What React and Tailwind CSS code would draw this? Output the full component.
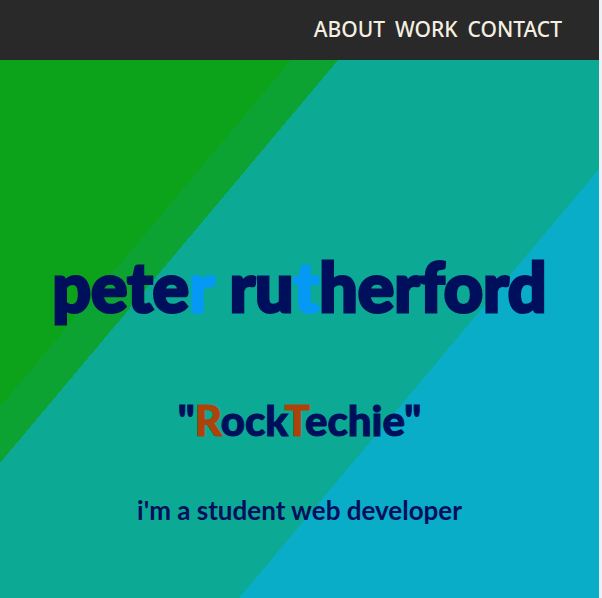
const links = ["About", "Work", "Contact"];

export default function App() {
  return (
    <div className="flex min-h-screen flex-col bg-[#eef0f5] pr-[3px]">
      <header className="flex h-[60px] items-center justify-end bg-[#292929] pr-[37px] pb-[2px]">
        <nav className="flex gap-[10px] font-['Noto_Sans',sans-serif] text-[21px] leading-7 font-medium text-[#f5f0e1] uppercase">
          {links.map((name) => (
            <a key={name} href={`#${name.toLowerCase()}`}>
              {name}
            </a>
          ))}
        </nav>
      </header>
      <main className="flex grow flex-col items-center bg-[linear-gradient(130deg,#0ca31b_223px,#0da332_223px,#0da332_259px,#0caa94_259px,#0caa94_529px,#0aadc7_529px)] pt-[186px] text-center font-['Lato',sans-serif] text-[#000f5c]">
        <h1 className="text-[68px] leading-20 font-black whitespace-nowrap [-webkit-text-stroke:3px_currentColor]">
          pete<span className="text-[#0599f5] [-webkit-text-stroke-color:#0599f5]">r</span> ru
          <span className="text-[#0599f5] [-webkit-text-stroke-color:#0599f5]">t</span>herford
        </h1>
        <h2 className="mt-[68px] text-[42px] leading-[52px] font-black [-webkit-text-stroke:1px_currentColor]">
          "<span className="text-[#ad430b] [-webkit-text-stroke-color:#ad430b]">R</span>ock
          <span className="text-[#ad430b] [-webkit-text-stroke-color:#ad430b]">T</span>echie"
        </h2>
        <p className="mt-12 text-[26px] leading-8 font-bold">
          i'm a student web developer
        </p>
      </main>
    </div>
  );
}
